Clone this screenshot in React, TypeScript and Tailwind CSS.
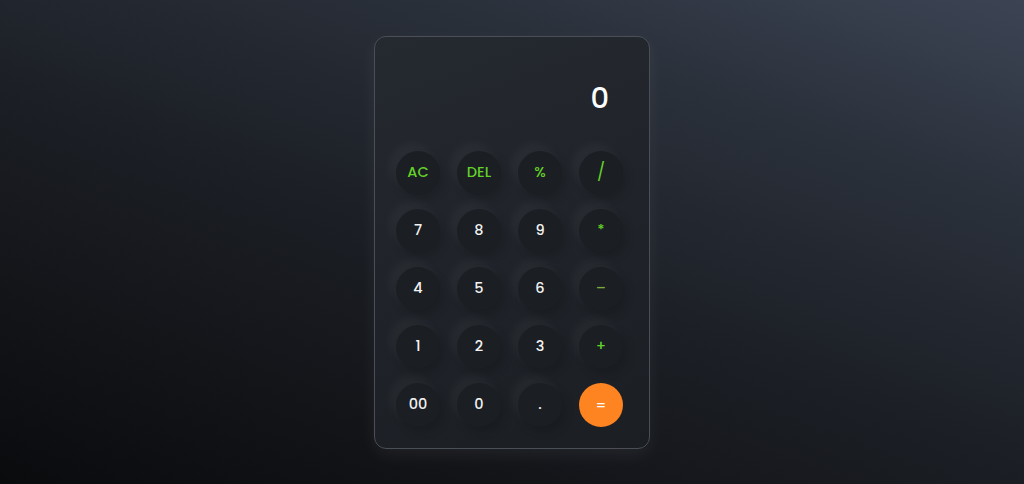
import React from "react";

const keys: { label: string; kind: "op" | "num" | "eq" }[] = [
  { label: "AC", kind: "op" },
  { label: "DEL", kind: "op" },
  { label: "%", kind: "op" },
  { label: "/", kind: "op" },
  { label: "7", kind: "num" },
  { label: "8", kind: "num" },
  { label: "9", kind: "num" },
  { label: "*", kind: "op" },
  { label: "4", kind: "num" },
  { label: "5", kind: "num" },
  { label: "6", kind: "num" },
  { label: "–", kind: "op" },
  { label: "1", kind: "num" },
  { label: "2", kind: "num" },
  { label: "3", kind: "num" },
  { label: "+", kind: "op" },
  { label: "00", kind: "num" },
  { label: "0", kind: "num" },
  { label: ".", kind: "num" },
  { label: "=", kind: "eq" },
];

export default function App() {
  return (
    <div
      className="w-[1024px] h-[484px] flex justify-center pt-[36px] bg-[linear-gradient(20deg,#0a0b0d_0%,#1b1e24_45%,#2a303a_75%,#3c4454_100%)]"
      style={{ fontFamily: '"Poppins", "Inter", "DejaVu Sans", sans-serif' }}
    >
      <div className="w-[276px] h-[413px] rounded-[12px] border border-[#4a4f57] bg-[linear-gradient(160deg,#252930_0%,#1f2228_60%,#1b1e23_100%)] shadow-[0_6px_18px_rgba(255,255,255,0.06)] flex flex-col">
        <div className="h-[114px] flex items-end justify-end pr-[40px] pb-[38px]">
          <span className="text-[29px] leading-none text-white font-medium">0</span>
        </div>
        <div className="grid grid-cols-[repeat(4,44px)] gap-x-[17px] gap-y-[14px] pl-[21px]">
          {keys.map((k) => (
            <div
              key={k.label}
              className={
                k.kind === "eq"
                  ? "w-[44px] h-[44px] rounded-full bg-[#fd8420] flex items-center justify-center text-white text-[14px] font-medium"
                  : "w-[44px] h-[44px] rounded-full bg-[#1b1e23] shadow-[-6px_-7px_12px_rgba(255,255,255,0.045),4px_5px_10px_rgba(0,0,0,0.15)] flex items-center justify-center text-[14.5px] font-medium " +
                    (k.kind === "op" ? "text-[#63d12a]" : "text-[#f2f2f2]")
              }
            >
              {k.label === "/" ? <span className="text-[17px] font-normal">/</span> : k.label === "–" ? <span className="text-[#7fa83a]">–</span> : k.label}
            </div>
          ))}
        </div>
      </div>
    </div>
  );
}
